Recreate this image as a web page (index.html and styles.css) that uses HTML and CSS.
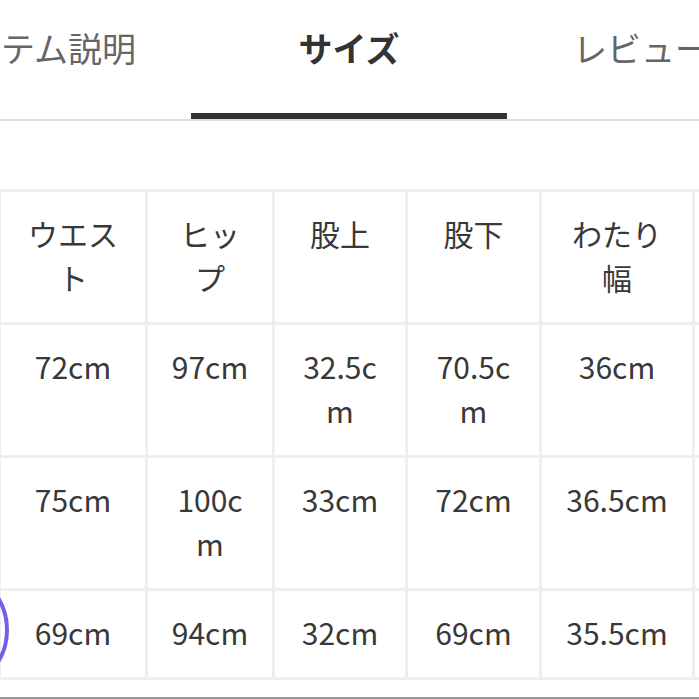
FILE: index.html
```html
<!DOCTYPE html>
<html lang="ja">
<head>
<meta charset="utf-8">
<link rel="stylesheet" href="styles.css">
</head>
<body>
<div class="page">
  <nav class="tabs">
    <div class="tab tab-left">アイテム説明</div>
    <div class="tab tab-active">サイズ</div>
    <div class="tab tab-right">レビュー</div>
  </nav>
  <div class="table-wrap">
    <div class="size-table">
      <div class="cell edge">サイズ</div>
      <div class="cell">ウエスト</div>
      <div class="cell">ヒップ</div>
      <div class="cell">股上</div>
      <div class="cell">股下</div>
      <div class="cell">わたり幅</div>
      <div class="cell edge">裾幅</div>

      <div class="cell edge">S</div>
      <div class="cell">72cm</div>
      <div class="cell">97cm</div>
      <div class="cell">32.5cm</div>
      <div class="cell">70.5cm</div>
      <div class="cell">36cm</div>
      <div class="cell edge">21cm</div>

      <div class="cell edge">M</div>
      <div class="cell">75cm</div>
      <div class="cell">100cm</div>
      <div class="cell">33cm</div>
      <div class="cell">72cm</div>
      <div class="cell">36.5cm</div>
      <div class="cell edge">22cm</div>

      <div class="cell edge">XS</div>
      <div class="cell">69cm</div>
      <div class="cell">94cm</div>
      <div class="cell">32cm</div>
      <div class="cell">69cm</div>
      <div class="cell">35.5cm</div>
      <div class="cell edge">20cm</div>
    </div>
    <div class="ring"></div>
  </div>
  <div class="bottom-bar"></div>
</div>
</body>
</html>
```
FILE: styles.css
```css
html, body {
  margin: 0;
  padding: 0;
  background: #ffffff;
}
body {
  font-family: "Noto Sans CJK JP", "Noto Sans", sans-serif;
  color: #333333;
}
.page {
  width: 699px;
  height: 699px;
  overflow: hidden;
  position: relative;
}
.tabs {
  display: grid;
  grid-template-columns: 191px 316px 192px;
  height: 119px;
  border-bottom: 2px solid #dddddd;
  white-space: nowrap;
  overflow: hidden;
}
.tab {
  font-size: 34px;
  line-height: 48px;
  padding-top: 24px;
  color: #666666;
  overflow: hidden;
}
.tab-left {
  display: flex;
  justify-content: flex-end;
  padding-right: 55px;
}
.tab-right {
  padding-left: 66px;
}
.tab-active {
  position: relative;
  text-align: center;
  font-weight: 700;
  color: #333333;
}
.tab-active::after {
  content: "";
  position: absolute;
  left: 0;
  right: 0;
  bottom: 0;
  height: 6px;
  background: #333333;
}
.table-wrap {
  position: relative;
  margin-top: 68px;
}
.size-table {
  display: grid;
  grid-template-columns: 60px 144px 124px 130px 131px 150px 150px;
  gap: 3px;
  padding: 3px;
  margin-left: -65px;
  width: max-content;
  background: #efefef;
}
.cell {
  background: #ffffff;
  font-size: 30px;
  line-height: 44px;
  padding: 19px 22px 23px;
  text-align: center;
  word-break: break-all;
  color: #383838;
}
.cell.edge {
  white-space: nowrap;
  overflow: hidden;
  padding-left: 0;
  padding-right: 0;
}
.ring {
  position: absolute;
  left: -117px;
  top: 378px;
  width: 118px;
  height: 118px;
  border: 4px solid #7a5ce6;
  border-radius: 50%;
}
.bottom-bar {
  margin-top: 17px;
  border-top: 2px solid #999999;
}
```
